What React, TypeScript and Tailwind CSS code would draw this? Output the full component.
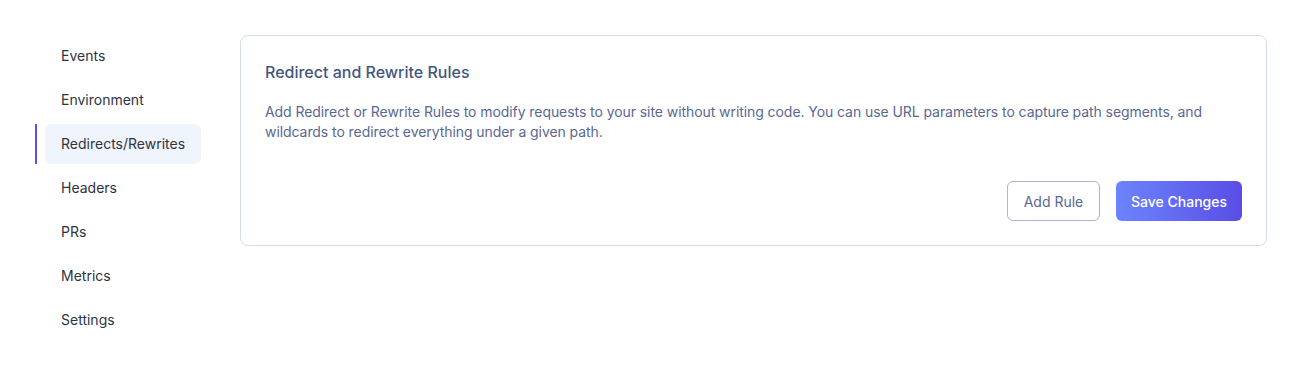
import React from "react";

const navItems = [
  "Events",
  "Environment",
  "Redirects/Rewrites",
  "Headers",
  "PRs",
  "Metrics",
  "Settings",
];

export default function App() {
  const active = "Redirects/Rewrites";

  return (
    <div
      className="min-h-[389px] w-full bg-white pt-[35px] pr-[35px]"
      style={{ fontFamily: "Inter, 'Open Sans', sans-serif" }}
    >
      <div className="flex items-start">
        {/* Sidebar */}
        <nav className="flex w-[200px] shrink-0 flex-col gap-1 pl-[35px] pt-px">
          {navItems.map((item) => {
            const isActive = item === active;
            return (
              <div
                key={item}
                className={`flex h-10 border-l-2 pl-2 ${
                  isActive ? "border-[#5b50ea]" : "border-transparent"
                }`}
              >
                <div
                  className={`flex flex-1 items-center rounded-md px-4 pb-px text-[14px] text-[#2f3340] ${
                    isActive ? "bg-[#eff4fd]" : ""
                  }`}
                >
                  {item}
                </div>
              </div>
            );
          })}
        </nav>

        {/* Card */}
        <div className="ml-10 flex-1 rounded-lg border border-[#d3ddef] bg-white p-6">
          <h3 className="text-[16px] font-medium leading-6 text-[#44567f]">
            Redirect and Rewrite Rules
          </h3>
          <p className="mt-[18px] text-[14px] leading-5 tracking-[-0.07px] text-[#5a6893]">
            Add Redirect or Rewrite Rules to modify requests to your site
            without writing code. You can use URL parameters to capture path
            segments, and wildcards to redirect everything under a given path.
          </p>
          <div className="mt-[39px] flex justify-end gap-4">
            <button className="h-10 w-[93px] rounded-md border border-[#a9b5d9] bg-white text-[14px] text-[#5a6893]">
              Add Rule
            </button>
            <button className="h-10 w-[126px] rounded-md bg-gradient-to-r from-[#6c84fb] to-[#5a4ce6] text-[14px] font-medium text-white">
              Save Changes
            </button>
          </div>
        </div>
      </div>
    </div>
  );
}
